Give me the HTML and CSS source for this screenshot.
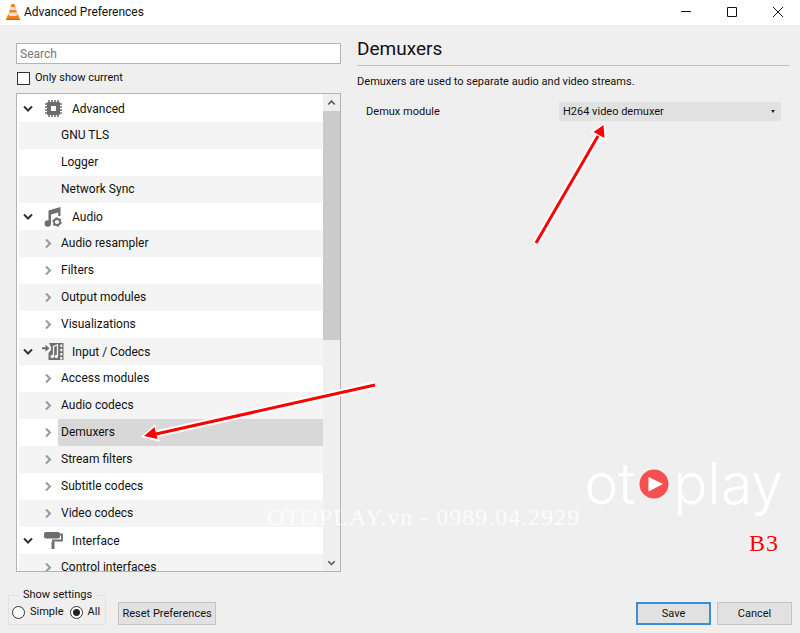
FILE: index.html
```html
<!DOCTYPE html>
<html lang="en">
<head>
    <meta charset="UTF-8">
    <meta name="viewport" content="width=device-width, initial-scale=1.0">
    <title>Advanced Preferences</title>
    <link rel="stylesheet" href="styles.css">
</head>
<body>
    <!-- Arrow shapes reused by the tree rows -->
    <svg class="defs" width="0" height="0" aria-hidden="true">
        <symbol id="open" viewBox="0 0 10 10"><path d="M1 2.500l4 4 4-4" fill="none" stroke="#333" stroke-width="2"/></symbol>
        <symbol id="closed" viewBox="0 0 10 10"><path d="M3 .5l4 4-4 4" fill="none" stroke="#999" stroke-width="2"/></symbol>
    </svg>

    <header class="titlebar">
        <svg class="cone" viewBox="0 0 14 16">
            <path d="M2 10.500h10l2 5H0z" fill="#f08010"/>
            <path d="M5.500 0h3l3.500 12q-5 2.500-10 0z" fill="#f5811f"/>
            <path d="M4.800 3h4.400l.9 3H3.900zM3.200 8.500h7.600l.8 2.700q-4.600 1.800-9.200 0z" fill="#dde4e8"/>
            <path d="M0 14.800h14V16H0z" fill="#d9640a"/>
        </svg>
        <span class="caption">Advanced Preferences</span>
        <div class="window-buttons">
            <button aria-label="Minimize"><svg viewBox="0 0 12 12"><path d="M1 5.500h10" stroke="#111"/></svg></button>
            <button aria-label="Maximize"><svg viewBox="0 0 12 12"><path d="M1.500 1.500h9v9h-9z" fill="none" stroke="#111"/></svg></button>
            <button aria-label="Close"><svg viewBox="0 0 12 12"><path d="M1 1l10 10M11 1L1 11" stroke="#111"/></svg></button>
        </div>
    </header>

    <main class="content">
        <section class="sidebar">
            <input class="search" type="text" placeholder="Search" aria-label="Search">
            <label class="check"><input type="checkbox"> Only show current</label>
            <div class="tree">
                <ul class="rows">
                    <li class="group"><svg class="arrow"><use href="#open"/></svg>
                        <svg class="icon" viewBox="0 0 20 20"><rect x="3" y="3" width="13" height="13" rx="1" fill="#6e6e6e"/><path d="M5 1v17M8 1v17M11 1v17M14 1v17M1 5h17M1 8h17M1 11h17M1 14h17" stroke="#6e6e6e" stroke-width="1.600"/><path d="M7 7h5v5H7z" fill="#fff"/></svg>
                        <span>Advanced</span></li>
                    <li class="item"><span>GNU TLS</span></li>
                    <li class="item"><span>Logger</span></li>
                    <li class="item"><span>Network Sync</span></li>
                    <li class="group"><svg class="arrow"><use href="#open"/></svg>
                        <svg class="icon" viewBox="0 0 20 20"><path d="M4.500 17V3.500L16.500 0v9h-2.300V5.500L7 7.500V17z" fill="#6e6e6e"/><circle cx="3.800" cy="16.500" r="3.200" fill="#6e6e6e"/><circle cx="13" cy="15" r="3" fill="none" stroke="#6e6e6e" stroke-width="1.800"/><circle cx="13" cy="15" r="4.200" fill="none" stroke="#6e6e6e" stroke-width="1.300" stroke-dasharray="2.200 2.200"/></svg>
                        <span>Audio</span></li>
                    <li class="item"><svg class="arrow"><use href="#closed"/></svg><span>Audio resampler</span></li>
                    <li class="item"><svg class="arrow"><use href="#closed"/></svg><span>Filters</span></li>
                    <li class="item"><svg class="arrow"><use href="#closed"/></svg><span>Output modules</span></li>
                    <li class="item"><svg class="arrow"><use href="#closed"/></svg><span>Visualizations</span></li>
                    <li class="group"><svg class="arrow"><use href="#open"/></svg>
                        <svg class="icon" viewBox="0 0 20 20"><path d="M-2 5.200h3.500V2.700L5.500 6.200l-4 3.500V7.200H-2z" fill="#6e6e6e"/><path d="M5 1h14.500v17H4.500v-7L7 8V5z" fill="#6e6e6e"/><path d="M9.500 14V4.500l4-1.500v11" fill="none" stroke="#f4f4f4" stroke-width="1.300"/><circle cx="8.300" cy="14.500" r="1.800" fill="#f4f4f4"/><circle cx="12.300" cy="14.500" r="1.700" fill="#f4f4f4"/><path d="M17.300 2.500v15" stroke="#f4f4f4" stroke-width="2" stroke-dasharray="2.500 1.700"/></svg>
                        <span>Input / Codecs</span></li>
                    <li class="item"><svg class="arrow"><use href="#closed"/></svg><span>Access modules</span></li>
                    <li class="item"><svg class="arrow"><use href="#closed"/></svg><span>Audio codecs</span></li>
                    <li class="item selected"><svg class="arrow"><use href="#closed"/></svg><span>Demuxers</span></li>
                    <li class="item"><svg class="arrow"><use href="#closed"/></svg><span>Stream filters</span></li>
                    <li class="item"><svg class="arrow"><use href="#closed"/></svg><span>Subtitle codecs</span></li>
                    <li class="item"><svg class="arrow"><use href="#closed"/></svg><span>Video codecs</span></li>
                    <li class="group"><svg class="arrow"><use href="#open"/></svg>
                        <svg class="icon" viewBox="0 0 20 20"><rect x="0" y="1" width="16" height="6.500" rx="2" fill="#6e6e6e"/><path d="M15 3.500h3v6H9v3" fill="none" stroke="#6e6e6e" stroke-width="1.800"/><path d="M7.500 11h3v7h-3z" fill="#6e6e6e"/></svg>
                        <span>Interface</span></li>
                    <li class="item"><svg class="arrow"><use href="#closed"/></svg><span>Control interfaces</span></li>
                </ul>
                <div class="scrollbar">
                    <svg viewBox="0 0 10 10"><path d="M2.500 6.500L5 4l2.500 2.500" fill="none" stroke="#555" stroke-width="1.200"/></svg>
                    <div class="thumb"></div>
                    <svg viewBox="0 0 10 10"><path d="M2.500 4L5 6.500 7.500 4" fill="none" stroke="#555" stroke-width="1.200"/></svg>
                </div>
            </div>
        </section>

        <section class="panel">
            <h1>Demuxers</h1>
            <p>Demuxers are used to separate audio and video streams.</p>
            <div class="field">
                <label for="module">Demux module</label>
                <div class="select">
                    <select id="module"><option>H264 video demuxer</option></select>
                </div>
            </div>
        </section>
    </main>

    <footer class="actions">
        <fieldset class="settings">
            <legend>Show settings</legend>
            <label><input type="radio" name="show"> Simple</label>
            <label><input type="radio" name="show" checked> All</label>
        </fieldset>
        <button class="btn reset">Reset Preferences</button>
        <button class="btn save">Save</button>
        <button class="btn">Cancel</button>
    </footer>

    <!-- Annotations over the window -->
    <svg class="pointers" viewBox="0 0 800 633" aria-hidden="true">
        <g stroke="#fff" stroke-width="4" fill="#fff">
            <path d="M536 243L598 136M375 385L156 434" stroke-width="7"/>
            <path d="M603 126l1 12-10-6zM145 436l9-8 3 11z"/>
        </g>
        <path d="M536 243L598 136M375 385L156 434" stroke="#f00" stroke-width="3"/>
        <path d="M603.500 125l1 13-11-6zM144 436l10.500-9 3 12z" fill="#f00"/>
    </svg>
    <div class="mark contact">OTOPLAY.vn - 0989.04.2929</div>
    <div class="brand">
        <span>ot</span>
        <svg viewBox="0 0 30 30"><circle cx="15" cy="15" r="14.500" fill="#f55050"/><path d="M9.500 8v14.500L24 15z" fill="#fff"/></svg>
        <span>play</span>
    </div>
    <div class="mark step">B3</div>
</body>
</html>
```
FILE: styles.css
```css
* {
    box-sizing: border-box;
}

body {
    margin: 0;
    height: 100vh;
    display: flex;
    flex-direction: column;
    position: relative;
    overflow: hidden;
    background: #efefef;
    color: #111;
    font-family: Roboto, "Noto Sans", sans-serif;
    font-size: 11px;
    line-height: 16px;
}

button, input, select {
    font: inherit;
    color: inherit;
    margin: 0;
}

.defs {
    position: absolute;
}

/* Title bar */
.titlebar {
    display: flex;
    align-items: center;
    height: 25px;
    padding: 0 10px 2px 6px;
    background: #fff;
    font-size: 12px;
}

.cone {
    width: 14px;
    height: 16px;
    margin-right: 4px;
}

.window-buttons {
    display: flex;
    gap: 22px;
    margin-left: auto;
}

.window-buttons button {
    display: flex;
    justify-content: center;
    width: 24px;
    padding: 0;
    border: 0;
    background: none;
}

.window-buttons svg {
    width: 12px;
    height: 12px;
}

/* Main area */
.content {
    flex: 1;
    min-height: 0;
    display: flex;
    gap: 16px;
    padding: 18px 10px 0 16px;
}

.sidebar {
    flex: 0 0 42%;
    display: flex;
    flex-direction: column;
}

.search {
    width: 100%;
    height: 21px;
    padding: 0 3px;
    border: 1px solid #b4b4b8;
    background: #fff;
    font-size: 12px;
}

.search::placeholder {
    color: #777;
}

.check {
    display: flex;
    align-items: center;
    gap: 5px;
    padding: 6px 0 7px 1px;
}

input[type="checkbox"], input[type="radio"] {
    appearance: none;
    width: 13px;
    height: 13px;
    border: 1px solid #333;
    background: #fff;
}

input[type="radio"] {
    border-radius: 50%;
}

input[type="radio"]:checked {
    background: radial-gradient(circle, #222 3px, #fff 4px);
}

/* Tree */
.tree {
    flex: 1;
    min-height: 0;
    display: flex;
    border: 1px solid #b4b4b8;
    background: #fff;
    font-size: 12px;
}

.rows {
    flex: 1;
    margin: 0;
    padding: 1px 0 0 2px;
    overflow: hidden;
    list-style: none;
}

.rows li {
    display: flex;
    align-items: center;
    height: 27px;
}

.rows li:nth-child(even) {
    background: #f4f4f4;
}

.group {
    padding-left: 4px;
}

.arrow {
    width: 10px;
    height: 10px;
}

.icon {
    width: 20px;
    height: 20px;
    margin: 0 8px 0 11px;
    overflow: visible;
}

.item .arrow {
    margin-left: 24px;
}

.item span {
    flex: 1;
    margin-left: 5px;
    padding-left: 3px;
    line-height: 27px;
}

.item span:first-child {
    margin-left: 39px;
}

.selected span {
    background: #d8d8d8;
}

.scrollbar {
    display: flex;
    flex-direction: column;
    width: 17px;
    background: #efefef;
}

.scrollbar svg {
    width: 17px;
    height: 17px;
    padding: 2px;
}

.thumb {
    height: 48%;
    margin-bottom: auto;
    background: #cbcbcb;
}

/* Right panel */
.panel {
    flex: 1;
}

.panel h1 {
    margin: 0;
    height: 23px;
    border-bottom: 1px solid #c0c0c0;
    font-size: 19px;
    font-weight: 400;
    line-height: 12px;
}

.panel p {
    margin: 8px 0 12px;
}

.field {
    display: flex;
    align-items: center;
    padding: 0 9px;
}

.field label {
    flex: 1;
}

.select {
    position: relative;
    flex: 0 0 222px;
}

.select::after {
    content: "";
    position: absolute;
    top: 8px;
    right: 6px;
    border: 2px solid transparent;
    border-top: 3px solid #222;
}

.select select {
    appearance: none;
    display: block;
    width: 100%;
    height: 19px;
    padding: 0 4px;
    border: 0;
    background: #e1e1e1;
}

/* Bottom buttons */
.actions {
    display: flex;
    align-items: flex-end;
    gap: 6px;
    padding: 15px 8px 8px 8px;
}

.settings {
    display: flex;
    gap: 6px;
    height: 38px;
    margin: 0 6px 0 0;
    padding: 1px 5px 0 3px;
    border: 1px solid #e2e2e2;
}

.settings legend {
    margin-left: 8px;
    padding: 0 3px;
}

.settings label {
    display: flex;
    align-items: center;
    gap: 5px;
    height: 16px;
}

.btn {
    width: 75px;
    height: 23px;
    padding: 0;
    border: 1px solid #c4c4c4;
    background: #e1e1e1;
    white-space: nowrap;
}

.reset {
    width: 98px;
    margin-right: auto;
}

.save {
    border: 2px solid #3c8fd6;
}

/* Overlays */
.pointers {
    position: absolute;
    top: 0;
    left: 0;
    width: 800px;
    height: 633px;
    pointer-events: none;
}

.mark {
    position: absolute;
    font-family: "Liberation Serif", serif;
    font-size: 24px;
    line-height: 26px;
    letter-spacing: 1px;
    white-space: nowrap;
    pointer-events: none;
}

.contact {
    left: 267px;
    bottom: 103px;
    color: rgba(255, 255, 255, 0.8);
}

.step {
    right: 21px;
    bottom: 77px;
    color: #f00;
}

.brand {
    position: absolute;
    right: 17px;
    bottom: 114px;
    display: flex;
    align-items: center;
    gap: 4px;
    color: #fff;
    font-family: Inter, sans-serif;
    font-size: 57px;
    font-weight: 300;
    line-height: 70px;
    pointer-events: none;
}

.brand svg {
    width: 30px;
    height: 30px;
}
```
